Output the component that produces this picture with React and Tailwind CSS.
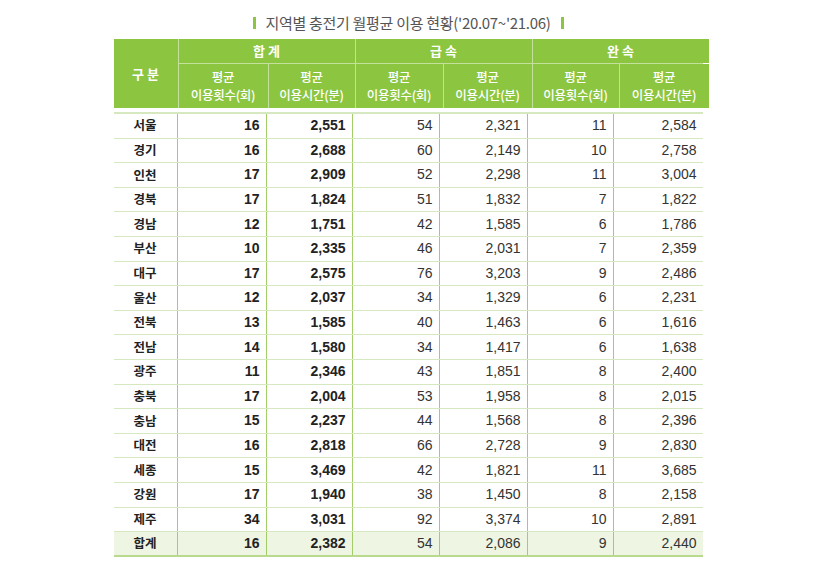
import React from 'react';

const rows = [
  ['서울', 16, '2,551', 54, '2,321', 11, '2,584'],
  ['경기', 16, '2,688', 60, '2,149', 10, '2,758'],
  ['인천', 17, '2,909', 52, '2,298', 11, '3,004'],
  ['경북', 17, '1,824', 51, '1,832', 7, '1,822'],
  ['경남', 12, '1,751', 42, '1,585', 6, '1,786'],
  ['부산', 10, '2,335', 46, '2,031', 7, '2,359'],
  ['대구', 17, '2,575', 76, '3,203', 9, '2,486'],
  ['울산', 12, '2,037', 34, '1,329', 6, '2,231'],
  ['전북', 13, '1,585', 40, '1,463', 6, '1,616'],
  ['전남', 14, '1,580', 34, '1,417', 6, '1,638'],
  ['광주', 11, '2,346', 43, '1,851', 8, '2,400'],
  ['충북', 17, '2,004', 53, '1,958', 8, '2,015'],
  ['충남', 15, '2,237', 44, '1,568', 8, '2,396'],
  ['대전', 16, '2,818', 66, '2,728', 9, '2,830'],
  ['세종', 15, '3,469', 42, '1,821', 11, '3,685'],
  ['강원', 17, '1,940', 38, '1,450', 8, '2,158'],
  ['제주', 34, '3,031', 92, '3,374', 10, '2,891'],
];

const total = ['합계', 16, '2,382', 54, '2,086', 9, '2,440'];

const cols = 'grid grid-cols-[64px_89px_86px_87px_88px_86px_89px]';
const kr = { fontFamily: '"Noto Sans CJK KR", "Noto Sans", sans-serif' };

const SubHead = ({ label }) => (
  <div className="bg-[#8cc540] flex flex-col items-center justify-center text-white text-[12.5px] leading-[18px] font-medium tracking-[-0.3px]">
    <span>평균</span>
    <span>{label}</span>
  </div>
);

const Row = ({ data, last }) => (
  <div
    className={`${cols} h-[24.6px] text-[14px] ${last ? 'bg-[#eef5e3] border-b-2 border-[#b9da8c]' : 'border-b border-[#d6e8bf]'}`}
  >
    <div className="flex items-center justify-center font-bold text-[12.5px] text-[#222] border-r border-[#a3cd68]" style={kr}>
      {data[0]}
    </div>
    {data.slice(1).map((v, i) => (
      <div
        key={i}
        className={`flex items-center justify-end pr-[6px] ${i < 5 ? 'border-r border-[#a3cd68]' : ''} ${i < 2 ? 'font-bold text-[#222]' : 'text-[#333]'}`}
        style={{ fontFamily: '"Liberation Sans", Arial, sans-serif' }}
      >
        {v}
      </div>
    ))}
  </div>
);

export default function App() {
  return (
    <div className="w-full h-[569px] bg-white" style={kr}>
      <div className="w-[589px] mx-auto pt-[13px]">
        <div className="flex items-center justify-center gap-[10px] h-[20px] text-[15px] text-[#555]">
          <span className="w-[3px] h-[12px] bg-[#8cc540]" />
          <span className="tracking-[-0.3px]">지역별 충전기 월평균 이용 현황('20.07~'21.06)</span>
          <span className="w-[3px] h-[12px] bg-[#8cc540]" />
        </div>

        {/* header */}
        <div className={`${cols} grid-rows-[24px_44px] gap-px bg-[#c3e09c] mt-[6px]`}>
          <div className="row-span-2 bg-[#8cc540] flex items-center justify-center text-white text-[13px] font-bold">
            구 분
          </div>
          <div className="col-span-2 bg-[#8cc540] flex items-center justify-center text-white text-[13px] font-bold">합 계</div>
          <div className="col-span-2 bg-[#8cc540] flex items-center justify-center text-white text-[13px] font-bold">급 속</div>
          <div className="col-span-2 bg-[#8cc540] flex items-center justify-center text-white text-[13px] font-bold">완 속</div>
          <SubHead label="이용횟수(회)" />
          <SubHead label="이용시간(분)" />
          <SubHead label="이용횟수(회)" />
          <SubHead label="이용시간(분)" />
          <SubHead label="이용횟수(회)" />
          <SubHead label="이용시간(분)" />
        </div>
        <div className="h-[4px]" />
        <div className="border-t-2 border-[#d6e8bf]">
          {rows.map((r) => (
            <Row key={r[0]} data={r} />
          ))}
          <Row data={total} last />
        </div>
      </div>
    </div>
  );
}
